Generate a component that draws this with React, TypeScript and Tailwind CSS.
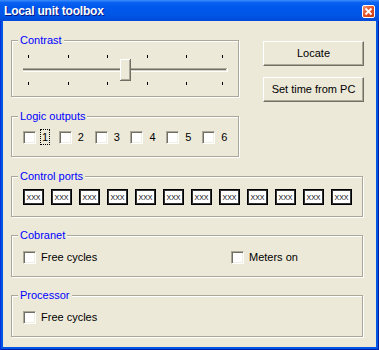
import React from "react";

const FONT = { fontFamily: '"Liberation Sans", Arial, sans-serif' };

function Check() {
  return (
    <span className="block w-[13px] h-[13px] shrink-0 bg-white border border-t-[#ACA899] border-l-[#ACA899] border-b-white border-r-white shadow-[inset_1px_1px_0_#716F64,inset_-1px_-1px_0_#F1EFE2]" />
  );
}

function Group({
  label,
  className,
  children,
}: {
  label: string;
  className: string;
  children?: React.ReactNode;
}) {
  return (
    <div
      className={
        "relative border border-[#ACA899] shadow-[inset_1px_1px_0_#fff,1px_1px_0_#fff] " +
        className
      }
    >
      <span className="absolute left-[6px] top-[-8px] px-[2px] bg-[#ECE9D8] text-[#0000ff] text-[11px] leading-[14px]">
        {label}
      </span>
      {children}
    </div>
  );
}

function Button({ children, className }: { children: React.ReactNode; className?: string }) {
  return (
    <div
      className={
        "w-[101px] h-[25px] flex items-center justify-center bg-[#ECE9D8] border border-t-white border-l-white border-b-[#716F64] border-r-[#716F64] shadow-[inset_-1px_-1px_0_#ACA899] text-[11px] text-black " +
        (className ?? "")
      }
    >
      {children}
    </div>
  );
}

function Slider() {
  const ticks = [16, 56, 95, 135, 174, 210];
  return (
    <svg width="226" height="55" className="absolute left-0 top-0">
      {ticks.map((x) => (
        <rect key={"t" + x} x={x} y={14} width={1} height={3} fill="#000" />
      ))}
      {ticks.map((x) => (
        <rect key={"b" + x} x={x} y={41} width={1} height={3} fill="#000" />
      ))}
      <rect x={11} y={27} width={204} height={1} fill="#ACA899" />
      <rect x={11} y={28} width={203} height={1} fill="#716F64" />
      <rect x={11} y={29} width={203} height={1} fill="#D8D5C6" />
      <rect x={11} y={30} width={205} height={1} fill="#fff" />
      <rect x={215} y={27} width={1} height={4} fill="#fff" />
      <rect x={108} y={18} width={11} height={22} fill="#ECE9D8" />
      <rect x={108} y={18} width={10} height={1} fill="#fff" />
      <rect x={108} y={18} width={1} height={21} fill="#fff" />
      <rect x={117} y={19} width={1} height={20} fill="#ACA899" />
      <rect x={109} y={38} width={9} height={1} fill="#ACA899" />
      <rect x={118} y={18} width={1} height={22} fill="#716F64" />
      <rect x={108} y={39} width={11} height={1} fill="#716F64" />
    </svg>
  );
}

export default function App() {
  const logic = ["1", "2", "3", "4", "5", "6"];
  const ports = Array.from({ length: 12 }, (_, i) => i);
  return (
    <div
      style={FONT}
      className="w-[379px] h-[350px] flex flex-col bg-[#0055E5] shadow-[inset_1px_0_0_#0831D9,inset_-1px_0_0_#001EA0,inset_0_-1px_0_#001EA0]"
    >
      <div className="h-[21px] shrink-0 flex items-center justify-between pl-[4px] pr-[4px] bg-[linear-gradient(to_bottom,#3D8BFF_0%,#0A63F0_12%,#0058EE_30%,#0055E5_75%,#0049D8_100%)]">
        <span className="text-white font-bold text-[12px] tracking-[-0.2px] leading-none [text-shadow:1px_1px_0_#0A1883]">
          Local unit toolbox
        </span>
        <div className="w-[13px] h-[13px] rounded-[2px] border border-white bg-[linear-gradient(135deg,#F09A7A_0%,#E2552C_45%,#C83A12_100%)] flex items-center justify-center mt-[1px]">
          <svg width="9" height="9" viewBox="0 0 9 9">
            <path d="M1.5 1.5 L7.5 7.5 M7.5 1.5 L1.5 7.5" stroke="#fff" strokeWidth="1.8" />
          </svg>
        </div>
      </div>
      <div className="flex-1 mx-[3px] mb-[3px] bg-[#ECE9D8] pl-[8px] pt-[19px]">
        <div className="flex">
          <div className="flex flex-col w-[228px]">
            <Group label="Contrast" className="h-[57px]">
              <Slider />
            </Group>
            <Group label="Logic outputs" className="h-[41px] mt-[19px]">
              <div className="flex pl-[11px] pt-[12px]">
                {logic.map((n, i) => (
                  <div key={n} className="w-[36px] flex items-center">
                    <Check />
                    <span
                      className={
                        "ml-[4px] px-[1px] text-[11px] leading-[14px] text-black border " +
                        (i === 0 ? "border-dotted border-black" : "border-transparent")
                      }
                    >
                      {n}
                    </span>
                  </div>
                ))}
              </div>
            </Group>
          </div>
          <div className="flex flex-col ml-[24px] mt-[1px] gap-[11px]">
            <Button>Locate</Button>
            <Button>Set time from PC</Button>
          </div>
        </div>
        <Group label="Control ports" className="w-[352px] h-[41px] mt-[19px]">
          <div className="flex gap-[7px] pl-[11px] pt-[12px]">
            {ports.map((p) => (
              <div
                key={p}
                className="w-[21px] h-[16px] flex items-center justify-center bg-white border border-black shadow-[inset_1px_1px_0_#333,inset_-1px_-1px_0_#333] text-[7px] leading-none text-black"
              >
                XXX
              </div>
            ))}
          </div>
        </Group>
        <Group label="Cobranet" className="w-[352px] h-[42px] mt-[18px]">
          <div className="flex pl-[11px] pt-[15px]">
            <div className="w-[208px] flex items-center">
              <Check />
              <span className="ml-[5px] text-[11px] leading-[13px] text-black">Free cycles</span>
            </div>
            <div className="flex items-center">
              <Check />
              <span className="ml-[5px] text-[11px] leading-[13px] text-black">Meters on</span>
            </div>
          </div>
        </Group>
        <Group label="Processor" className="w-[352px] h-[42px] mt-[18px]">
          <div className="flex pl-[11px] pt-[15px]">
            <div className="flex items-center">
              <Check />
              <span className="ml-[5px] text-[11px] leading-[13px] text-black">Free cycles</span>
            </div>
          </div>
        </Group>
      </div>
    </div>
  );
}
